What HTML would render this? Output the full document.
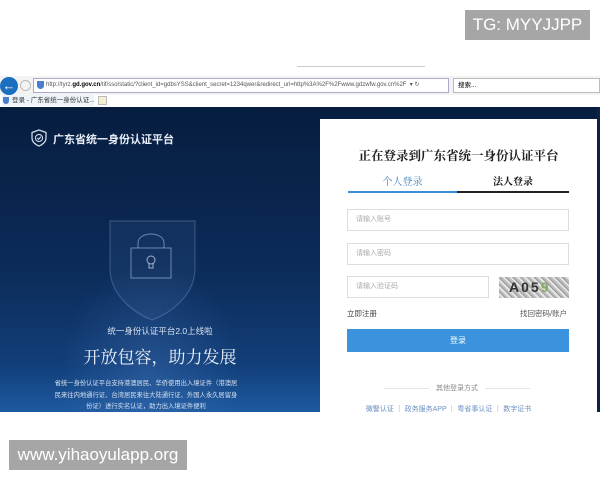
<!DOCTYPE html>
<html><head><meta charset="utf-8"><style>
*{margin:0;padding:0;box-sizing:border-box}
body{width:600px;height:480px;background:#fff;position:relative;overflow:hidden;font-family:"Liberation Sans","Noto Sans CJK SC",sans-serif}
.a{position:absolute}
.cj{font-family:"Noto Serif CJK SC","Noto Sans CJK SC",serif}
</style></head><body>
<div class="a" style="left:465px;top:10px;width:125px;height:30px;background:#a6a6a6;color:#fff;font-size:17px;line-height:30px;text-align:center">TG: MYYJJPP</div>
<div class="a" style="left:297px;top:66px;width:128px;height:1px;background:#ccc"></div>
<div class="a" style="left:0;top:76px;width:600px;height:19px;background:#f3f3f3"></div>
<div class="a" style="left:0;top:77px;width:18px;height:18px;border-radius:50%;background:#1a6fc0;color:#fff;font-size:13px;line-height:18px;text-align:center;font-weight:bold">←</div>
<div class="a" style="left:20px;top:80px;width:11px;height:11px;border-radius:50%;border:1px solid #bbb"></div>
<div class="a" style="left:33px;top:78px;width:416px;height:15px;border:1px solid #aac;background:#fff;font-size:6px;line-height:13px;color:#555;padding-left:12px;white-space:nowrap;overflow:hidden">http://tyrz.<b style="color:#000">gd.gov.cn</b>/tif/sso/static/?client_id=gdbsYSS&amp;client_secret=1234qwer&amp;redirect_uri=http%3A%2F%2Fwww.gdzwfw.gov.cn%2F &nbsp;▾ ↻</div>
<div class="a" style="left:37px;top:81px;width:7px;height:8px;background:#4a7fd0;border-radius:0 0 4px 4px"></div>
<div class="a" style="left:453px;top:78px;width:147px;height:15px;border:1px solid #bbb;background:#fff;font-size:6.5px;line-height:13px;padding-left:4px">搜索...</div>
<div class="a" style="left:0;top:95px;width:600px;height:12px;background:#fff"></div>
<div class="a" style="left:2px;top:95px;width:92px;height:11px;font-size:6.5px;line-height:11px;color:#333;background:#eef3fa;padding-left:10px;white-space:nowrap;overflow:hidden">登录 - 广东省统一身份认证... ×</div>
<div class="a" style="left:3px;top:97px;width:6px;height:7px;background:#4a7fd0;border-radius:0 0 3px 3px"></div>
<div class="a" style="left:98px;top:96px;width:9px;height:9px;border:1px solid #bbb;background:#f5f0d0"></div>
<div class="a" style="left:0;top:107px;width:600px;height:305px;background:linear-gradient(180deg,#061d3f 0%,#0c2c5a 55%,#123f7a 85%,#1e5aa0 100%)"></div>
<div class="a" style="left:0;top:107px;width:320px;height:305px;background:radial-gradient(ellipse 90px 110px at 150px 265px,rgba(80,130,200,.3),transparent)"></div>
<svg class="a" style="left:31px;top:129px" width="16" height="18" viewBox="0 0 16 18"><path d="M8 1 L15 3.5 V9 C15 13 11 16 8 17 C5 16 1 13 1 9 V3.5 Z" fill="none" stroke="#cfd8e6" stroke-width="1.3"/><circle cx="8" cy="9" r="3.6" fill="none" stroke="#cfd8e6" stroke-width="1.1"/><path d="M6.3 9 L7.6 10.3 L10 7.8" fill="none" stroke="#cfd8e6" stroke-width="1.1"/></svg>
<div class="a" style="left:53px;top:131px;color:#e8eef7;font-size:11px;font-weight:bold">广东省统一身份认证平台</div>
<svg class="a" style="left:105px;top:218px" width="95" height="105" viewBox="0 0 95 105"><path d="M5 3 H90 V50 C90 75 70 93 47 102 C25 93 5 75 5 50 Z" fill="rgba(100,140,200,.1)" stroke="rgba(170,200,240,.25)" stroke-width="1.2"/><rect x="26" y="30" width="40" height="30" fill="none" stroke="rgba(200,220,250,.5)"/><path d="M33 30 V25 C33 13 59 13 59 25 V30" fill="none" stroke="rgba(200,220,250,.5)"/><circle cx="46" cy="42" r="4" fill="none" stroke="rgba(220,230,250,.7)"/><path d="M44 45 V50 H48 V45" fill="none" stroke="rgba(220,230,250,.7)"/></svg>
<div class="a" style="left:0;top:325px;width:320px;text-align:center;color:#d6e0ee;font-size:8.5px">统一身份认证平台2.0上线啦</div>
<div class="a cj" style="left:0;top:343px;width:320px;text-align:center;color:#eef3fa;font-size:17px">开放包容，助力发展</div>
<div class="a" style="left:52px;top:378px;width:188px;text-align:center;color:#d6e0ee;font-size:6.3px;line-height:11.5px">省统一身份认证平台支持港澳居民、华侨使用出入境证件（港澳居民来往内地通行证、台湾居民来往大陆通行证、外国人永久居留身份证）进行实名认证，助力出入境证件便利</div>
<div class="a" style="left:320px;top:119px;width:277px;height:293px;background:#fff"></div>
<div class="a cj" style="left:320px;top:146px;width:277px;text-align:center;font-size:12.5px;color:#222;font-weight:bold">正在登录到广东省统一身份认证平台</div>
<div class="a cj" style="left:348px;top:173px;width:109px;text-align:center;font-size:10px;color:#3a7fc0">个人登录</div>
<div class="a cj" style="left:457px;top:173px;width:112px;text-align:center;font-size:10px;color:#111;font-weight:bold">法人登录</div>
<div class="a" style="left:348px;top:191px;width:109px;height:2px;background:#3a8fd8"></div>
<div class="a" style="left:457px;top:191px;width:112px;height:2px;background:#222"></div>
<div class="a" style="left:347px;top:209px;width:222px;height:22px;border:1px solid #ddd;font-size:7px;color:#aaa;line-height:20px;padding-left:8px">请输入账号</div>
<div class="a" style="left:347px;top:243px;width:222px;height:22px;border:1px solid #ddd;font-size:7px;color:#aaa;line-height:20px;padding-left:8px">请输入密码</div>
<div class="a" style="left:347px;top:276px;width:142px;height:22px;border:1px solid #ddd;font-size:7px;color:#aaa;line-height:20px;padding-left:8px">请输入验证码</div>
<div class="a" style="left:499px;top:277px;width:70px;height:21px;background:repeating-linear-gradient(45deg,#bbb 0 2px,#e5e5e5 2px 4px,#999 4px 5px);font-size:14px;color:#333;font-weight:bold;letter-spacing:2px;line-height:21px;padding-left:10px">A05<span style="color:#8a6">9</span></div>
<div class="a" style="left:347px;top:308px;font-size:7.5px;color:#444">立即注册</div>
<div class="a" style="left:520px;top:308px;font-size:7.5px;color:#555">找回密码/账户</div>
<div class="a" style="left:347px;top:329px;width:222px;height:23px;background:#3a93dc;color:#fff;font-size:8px;text-align:center;line-height:23px">登录</div>
<div class="a" style="left:384px;top:388px;width:146px;height:1px;background:#e4e4e4"></div>
<div class="a" style="left:429px;top:383px;width:56px;background:#fff;text-align:center;font-size:7px;color:#888">其他登录方式</div>
<div class="a" style="left:320px;top:404px;width:257px;text-align:center;font-size:7px;color:#6a8fbf;white-space:nowrap">微警认证 ｜ 政务服务APP ｜ 粤省事认证 ｜ 数字证书</div>
<div class="a" style="left:597px;top:107px;width:3px;height:305px;background:#0a2448"></div>
<div class="a" style="left:9px;top:440px;width:178px;height:30px;background:#a6a6a6;color:#fff;font-size:17px;line-height:30px;text-align:center">www.yihaoyulapp.org</div>
</body></html>
